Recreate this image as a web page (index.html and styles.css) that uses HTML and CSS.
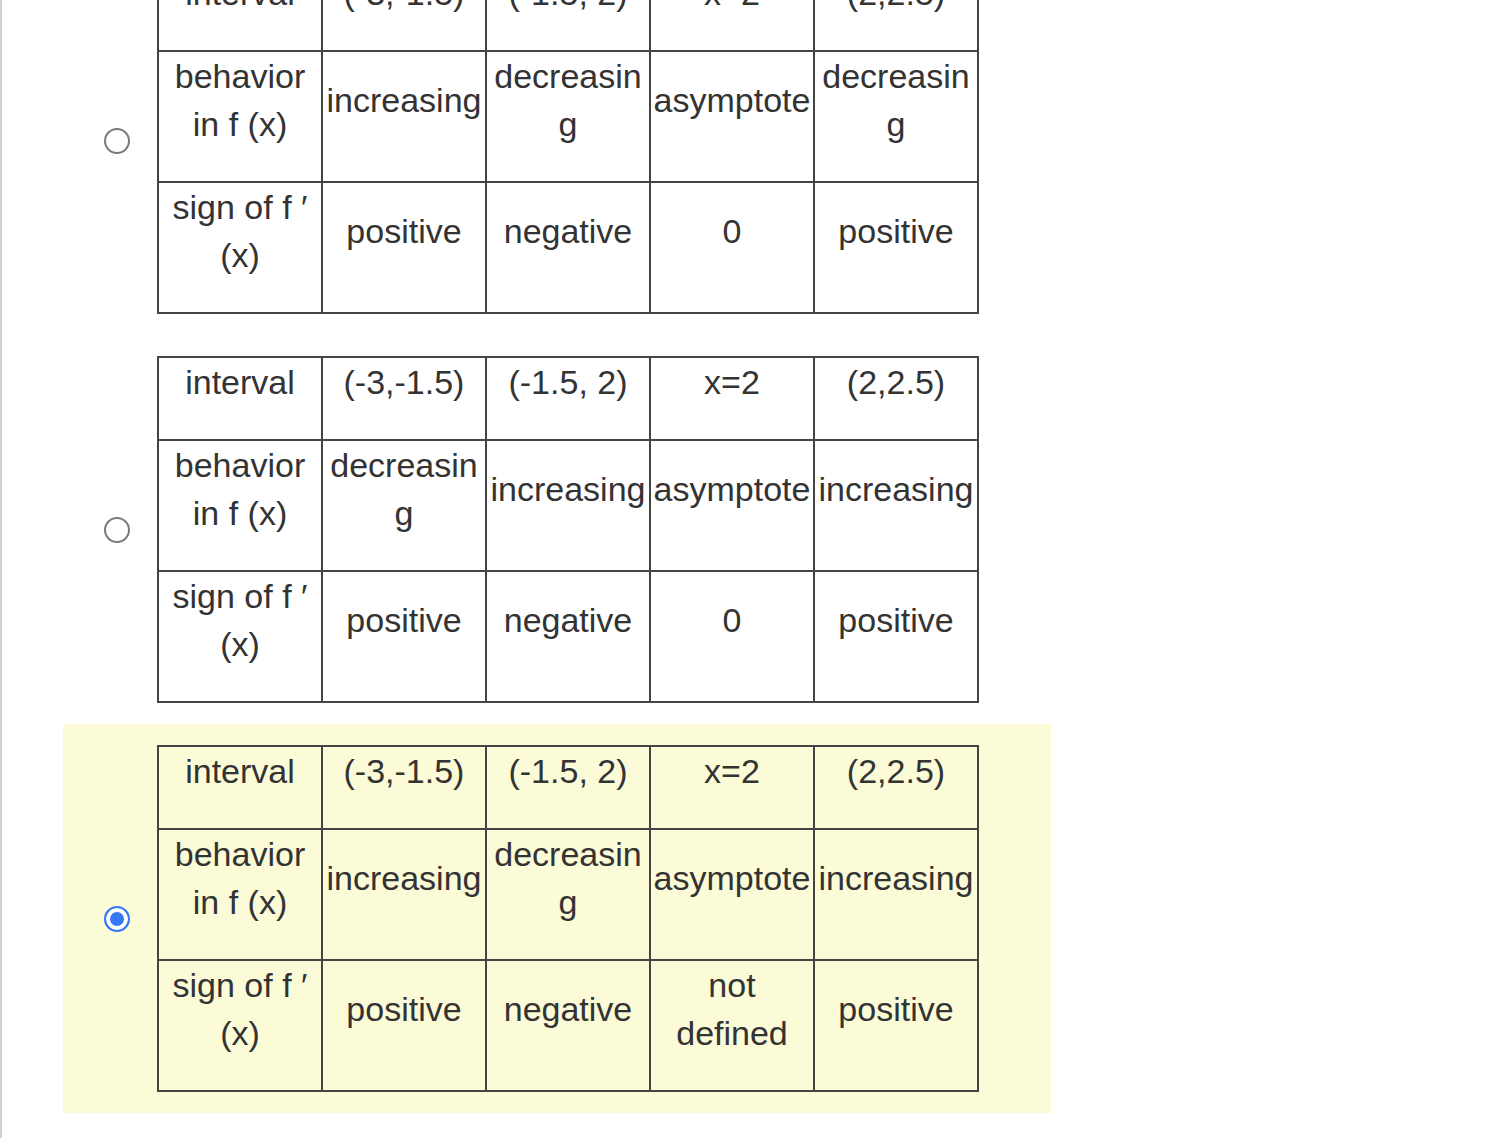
FILE: index.html
```html
<!DOCTYPE html>
<html>
<head>
<meta charset="utf-8">
<link rel="stylesheet" href="styles.css">
</head>
<body>
<div class="page">
  <div class="list">
    <div class="option">
      <span class="radio"></span>
      <table class="sign-table">
        <tr><td><p>interval</p></td><td><p>(-3,-1.5)</p></td><td><p>(-1.5, 2)</p></td><td><p>x=2</p></td><td><p>(2,2.5)</p></td></tr>
        <tr><td><p>behavior in f (x)</p></td><td><p>increasing</p></td><td><p>decreasing</p></td><td><p>asymptote</p></td><td><p>decreasing</p></td></tr>
        <tr><td><p>sign of f ′ (x)</p></td><td><p>positive</p></td><td><p>negative</p></td><td><p>0</p></td><td><p>positive</p></td></tr>
      </table>
    </div>
    <div class="option">
      <span class="radio"></span>
      <table class="sign-table">
        <tr><td><p>interval</p></td><td><p>(-3,-1.5)</p></td><td><p>(-1.5, 2)</p></td><td><p>x=2</p></td><td><p>(2,2.5)</p></td></tr>
        <tr><td><p>behavior in f (x)</p></td><td><p>decreasing</p></td><td><p>increasing</p></td><td><p>asymptote</p></td><td><p>increasing</p></td></tr>
        <tr><td><p>sign of f ′ (x)</p></td><td><p>positive</p></td><td><p>negative</p></td><td><p>0</p></td><td><p>positive</p></td></tr>
      </table>
    </div>
    <div class="option selected">
      <span class="radio checked"></span>
      <table class="sign-table">
        <tr><td><p>interval</p></td><td><p>(-3,-1.5)</p></td><td><p>(-1.5, 2)</p></td><td><p>x=2</p></td><td><p>(2,2.5)</p></td></tr>
        <tr><td><p>behavior in f (x)</p></td><td><p>increasing</p></td><td><p>decreasing</p></td><td><p>asymptote</p></td><td><p>increasing</p></td></tr>
        <tr><td><p>sign of f ′ (x)</p></td><td><p>positive</p></td><td><p>negative</p></td><td><p>not defined</p></td><td><p>positive</p></td></tr>
      </table>
    </div>
  </div>
</div>
</body>
</html>
```
FILE: styles.css
```css
html, body {
  margin: 0;
  padding: 0;
  background: #fff;
}
.page {
  border-left: 2px solid #d2d2d2;
  min-height: 1138px;
  box-sizing: border-box;
  overflow: hidden;
  font-family: "Liberation Sans", Arial, sans-serif;
  color: #333;
}
.list {
  margin-top: -54px;
  padding-left: 61px;
}
.option {
  display: flex;
  align-items: center;
  width: 988px;
  box-sizing: border-box;
  padding: 21px 72px 21px 41px;
}
.option.selected {
  background: #fbfbd7;
}
.radio {
  flex: none;
  width: 26px;
  height: 26px;
  box-sizing: border-box;
  border: 2px solid #7a7a7a;
  border-radius: 50%;
  background: #fff;
  margin-right: 27px;
}
.radio.checked {
  border-color: #3478f6;
  background: #3478f6;
  box-shadow: inset 0 0 0 4px #fff;
}
.sign-table {
  border-collapse: collapse;
  table-layout: fixed;
  width: 822px;
  flex: none;
}
.sign-table td {
  border: 2px solid #444;
  padding: 0;
  text-align: center;
  vertical-align: middle;
  font-size: 34px;
  line-height: 48px;
  overflow-wrap: anywhere;
  word-break: break-word;
}
.sign-table p {
  margin: 0 0 33px;
}
```
